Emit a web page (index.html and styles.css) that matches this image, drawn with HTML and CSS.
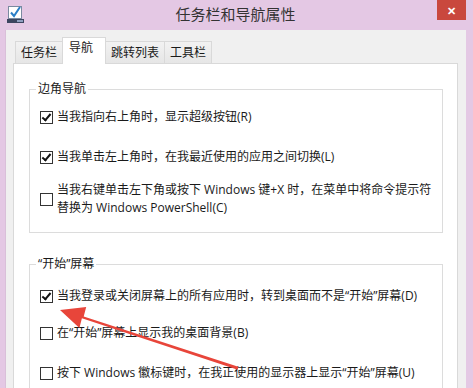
FILE: index.html
```html
<!DOCTYPE html>
<html lang="zh-CN">
<head>
    <meta charset="UTF-8">
    <title>任务栏和导航属性</title>
    <link rel="stylesheet" href="styles.css">
</head>
<body>
    <div class="window">
        <div class="titlebar">
            <svg class="app-icon" width="17" height="18" viewBox="0 0 17 18">
                <rect x="1.5" y="1.5" width="13" height="12" fill="#fff" stroke="#7a8aa0"/>
                <path d="M4 7.5 L7 11 L13 2" fill="none" stroke="#2b7fc8" stroke-width="2"/>
                <rect x="0" y="14" width="17" height="4" fill="#3c4660"/>
                <rect x="10" y="15" width="6" height="2" fill="#8fa0c0"/>
            </svg>
            <div class="title">任务栏和导航属性</div>
            <div class="close">✕</div>
        </div>
        <div class="client">
            <div class="tabs">
                <div class="tab">任务栏</div>
                <div class="tab active">导航</div>
                <div class="tab">跳转列表</div>
                <div class="tab">工具栏</div>
            </div>
            <div class="panel">
                <fieldset class="group group-corner">
                    <legend>边角导航</legend>
                    <label class="row r1"><span class="box checked"></span><span>当我指向右上角时，显示超级按钮(R)</span></label>
                    <label class="row r2"><span class="box checked"></span><span>当我单击左上角时，在我最近使用的应用之间切换(L)</span></label>
                    <label class="row r3"><span class="box"></span><span>当我右键单击左下角或按下 Windows 键+X 时，在菜单中将命令提示符<br>替换为 Windows PowerShell(C)</span></label>
                </fieldset>
                <fieldset class="group group-start">
                    <legend>“开始”屏幕</legend>
                    <label class="row s1"><span class="box checked"></span><span>当我登录或关闭屏幕上的所有应用时，转到桌面而不是“开始”屏幕(D)</span></label>
                    <label class="row s2"><span class="box"></span><span>在“开始”屏幕上显示我的桌面背景(B)</span></label>
                    <label class="row s3"><span class="box"></span><span>按下 Windows 徽标键时，在我正使用的显示器上显示“开始”屏幕(U)</span></label>
                </fieldset>
            </div>
        </div>
        <svg class="arrow" width="473" height="388" viewBox="0 0 473 388">
            <polygon fill="#e8453a" points="60,310 86.2,306.9 83.7,316.5 238.3,366.8 237.7,369.8 81.9,318.3 79.4,327.9"/>
        </svg>
    </div>
</body>
</html>
```

FILE: styles.css
```css
body {
    margin: 0;
    overflow: hidden;
    font-family: "Open Sans", "Noto Sans CJK SC", sans-serif;
    font-size: 12px;
    color: #1a1a1a;
}

.window {
    position: relative;
    width: 473px;
    height: 388px;
    padding: 0 7px 0 5px;
    box-sizing: border-box;
    background-color: #e4c8e4;
}

.titlebar {
    height: 30px;
    display: flex;
    align-items: center;
    position: relative;
}

.app-icon {
    margin-left: 2px;
    margin-top: -2px;
}

.title {
    flex: 1;
    text-align: center;
    font-size: 15px;
    color: #333;
    margin-top: -4px;
    padding-right: 19px;
}

.close {
    position: absolute;
    top: 0;
    right: 0;
    width: 29px;
    height: 20px;
    background-color: #c9483d;
    color: #fff;
    font-size: 11px;
    font-weight: bold;
    display: flex;
    align-items: center;
    justify-content: center;
}

.client {
    height: 358px;
    background-color: #f0f0f0;
    padding: 7px 8px 0 7px;
    box-sizing: border-box;
    border-left: 1px solid #d9c0d9;
}

.tabs {
    display: flex;
    align-items: flex-end;
    height: 26px;
    padding-left: 2px;
    position: relative;
    z-index: 1;
}

.tab {
    height: 21px;
    line-height: 21px;
    padding: 0 5px;
    border: 1px solid #d9d9d9;
    border-bottom: none;
    background: linear-gradient(#f2f2f2, #e6e6e6);
}

.tab + .tab {
    margin-left: -1px;
}

.tab.active {
    height: 26px;
    line-height: 20px;
    padding: 0 12px 0 6px;
    background: #fff;
    margin-bottom: -1px;
    position: relative;
    z-index: 2;
}

.panel {
    background-color: #fff;
    border: 1px solid #d9d9d9;
    height: 308px;
    overflow: hidden;
    padding: 16px 14px 0 15px;
}

.group {
    margin: 0;
    padding: 0 0 15px 10px;
    border: 1px solid #dcdcdc;
    min-width: 0;
}

.group legend {
    padding: 0 2px;
    line-height: 18px;
    margin-left: -4px;
}

.group-start {
    margin-top: 22px;
}

.row {
    display: flex;
    align-items: center;
    line-height: 18px;
    gap: 4px;
}

.box {
    width: 11px;
    height: 11px;
    border: 1px solid #333;
    background: #fff;
    flex: none;
    position: relative;
}

.box.checked::after {
    content: "";
    position: absolute;
    left: 3px;
    top: 0;
    width: 3px;
    height: 7px;
    border: solid #111;
    border-width: 0 2px 2px 0;
    transform: rotate(40deg);
}

.r1 { margin-top: 10px; }
.r2 { margin-top: 22px; }
.r3 { margin-top: 15px; }

.s1 { margin-top: 14px; }
.s2 { margin-top: 19px; }
.s3 { margin-top: 22px; }

.arrow {
    position: absolute;
    top: 0;
    left: 0;
    pointer-events: none;
}
```
